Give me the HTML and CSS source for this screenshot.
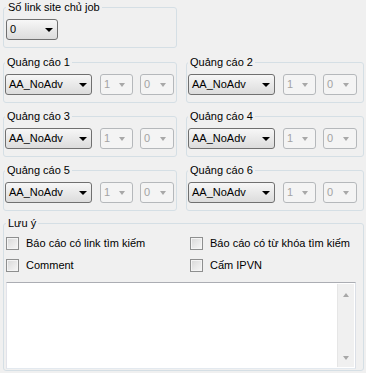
FILE: index.html
```html
<!DOCTYPE html>
<html lang="vi">
<head>
  <meta charset="UTF-8" />
  <title>Cấu hình quảng cáo</title>
  <link rel="stylesheet" href="styles.css">
</head>
<body>
  <div class="form">
    <!-- so link -->
    <fieldset class="group group-links">
      <legend>Số link site chủ job</legend>
      <div class="combo combo-links"><span class="val">0</span><span class="arrow"></span></div>
    </fieldset>

    <!-- quang cao 1..6 -->
    <div class="ads">
      <fieldset class="group ad">
        <legend>Quảng cáo 1</legend>
        <div class="row">
          <div class="combo combo-adv"><span class="val">AA_NoAdv</span><span class="arrow"></span></div>
          <div class="combo combo-num disabled"><span class="val">1</span><span class="arrow"></span></div>
          <div class="combo combo-num disabled"><span class="val">0</span><span class="arrow"></span></div>
        </div>
      </fieldset>
      <fieldset class="group ad">
        <legend>Quảng cáo 2</legend>
        <div class="row">
          <div class="combo combo-adv"><span class="val">AA_NoAdv</span><span class="arrow"></span></div>
          <div class="combo combo-num disabled"><span class="val">1</span><span class="arrow"></span></div>
          <div class="combo combo-num disabled"><span class="val">0</span><span class="arrow"></span></div>
        </div>
      </fieldset>
      <fieldset class="group ad">
        <legend>Quảng cáo 3</legend>
        <div class="row">
          <div class="combo combo-adv"><span class="val">AA_NoAdv</span><span class="arrow"></span></div>
          <div class="combo combo-num disabled"><span class="val">1</span><span class="arrow"></span></div>
          <div class="combo combo-num disabled"><span class="val">0</span><span class="arrow"></span></div>
        </div>
      </fieldset>
      <fieldset class="group ad">
        <legend>Quảng cáo 4</legend>
        <div class="row">
          <div class="combo combo-adv"><span class="val">AA_NoAdv</span><span class="arrow"></span></div>
          <div class="combo combo-num disabled"><span class="val">1</span><span class="arrow"></span></div>
          <div class="combo combo-num disabled"><span class="val">0</span><span class="arrow"></span></div>
        </div>
      </fieldset>
      <fieldset class="group ad">
        <legend>Quảng cáo 5</legend>
        <div class="row">
          <div class="combo combo-adv"><span class="val">AA_NoAdv</span><span class="arrow"></span></div>
          <div class="combo combo-num disabled"><span class="val">1</span><span class="arrow"></span></div>
          <div class="combo combo-num disabled"><span class="val">0</span><span class="arrow"></span></div>
        </div>
      </fieldset>
      <fieldset class="group ad">
        <legend>Quảng cáo 6</legend>
        <div class="row">
          <div class="combo combo-adv"><span class="val">AA_NoAdv</span><span class="arrow"></span></div>
          <div class="combo combo-num disabled"><span class="val">1</span><span class="arrow"></span></div>
          <div class="combo combo-num disabled"><span class="val">0</span><span class="arrow"></span></div>
        </div>
      </fieldset>
    </div>

    <!-- luu y -->
    <fieldset class="group notes">
      <legend>Lưu ý</legend>
      <div class="checks">
        <label class="check"><span class="box"></span>Báo cáo có link tìm kiếm</label>
        <label class="check"><span class="box"></span>Báo cáo có từ khóa tìm kiếm</label>
        <label class="check"><span class="box"></span>Comment</label>
        <label class="check"><span class="box"></span>Cấm IPVN</label>
      </div>
      <div class="memo">
        <div class="memo-body"></div>
        <div class="scroll"><span class="up"></span><span class="down"></span></div>
      </div>
    </fieldset>
  </div>
</body>
</html>
```

FILE: styles.css
```css
* { box-sizing: border-box; }
body { margin: 0; background: #f0f0f0; color: #000; font: 11px/13px "Liberation Sans", Arial, sans-serif; }
.form { display: flex; flex-direction: column; gap: 8px; padding: 1px 2px 0 3px; }

.group { margin: 0; min-width: 0; border: 1px solid #d5dfe5; border-radius: 3px; padding: 5px 2px 7px; }
.group legend { padding: 0 2px; margin-left: 0; line-height: 13px; }
.group-links { width: 174px; }

.ads { display: grid; grid-template-columns: 174px 178px; column-gap: 9px; row-gap: 7px; }
.ad { padding-left: 1px; }
.row { display: flex; gap: 7px; }
.row .combo-adv { margin-right: 1px; }

.combo { position: relative; height: 21px; border: 1px solid #707070; border-radius: 3px; background: linear-gradient(#f7f7f7, #e9e9e9 50%, #dcdcdc); padding: 3px 0 0 3px; }
.combo .arrow { position: absolute; right: 4px; top: 8px; width: 0; height: 0; border-left: 4px solid transparent; border-right: 4px solid transparent; border-top: 4px solid #000; }
.combo-links { width: 52px; }
.combo-adv { width: 87px; }
.combo-num { width: 33px; }
.combo-num + .combo-num { width: 34px; }
.combo.disabled { border-color: #b5b8bb; background: #f4f4f4; color: #a3a3a3; }
.combo.disabled .arrow { right: 7px; border-top-color: #a8a8a8; border-left-width: 3.5px; border-right-width: 3.5px; }

.notes { margin-top: -2px; padding: 7px 7px 1px 2px; }
.checks { display: grid; grid-template-columns: 184px 1fr; row-gap: 9px; }
.check { display: flex; align-items: center; gap: 7px; height: 13px; }
.check .box { width: 13px; height: 13px; border: 1px solid #8e8f8f; background: linear-gradient(135deg, #d8d8d8, #f7f7f7); box-shadow: inset 0 0 0 1px #f4f4f4; }

.memo { display: flex; margin-top: 10px; height: 87px; background: #fff; border: 1px solid; border-color: #abadb3 #dbdfe6 #e3e9ef #e2e3ea; padding: 1px; }
.memo-body { flex: 1; }
.scroll { width: 17px; display: flex; flex-direction: column; justify-content: space-between; align-items: center; padding: 9px 0 7px; background: #f0f0f0; border-left: 1px solid #e6e6e6; }
.scroll span { width: 0; height: 0; border-left: 3.5px solid transparent; border-right: 3.5px solid transparent; }
.scroll .up { border-bottom: 4px solid #a7a7a7; }
.scroll .down { border-top: 4px solid #a7a7a7; }
```
